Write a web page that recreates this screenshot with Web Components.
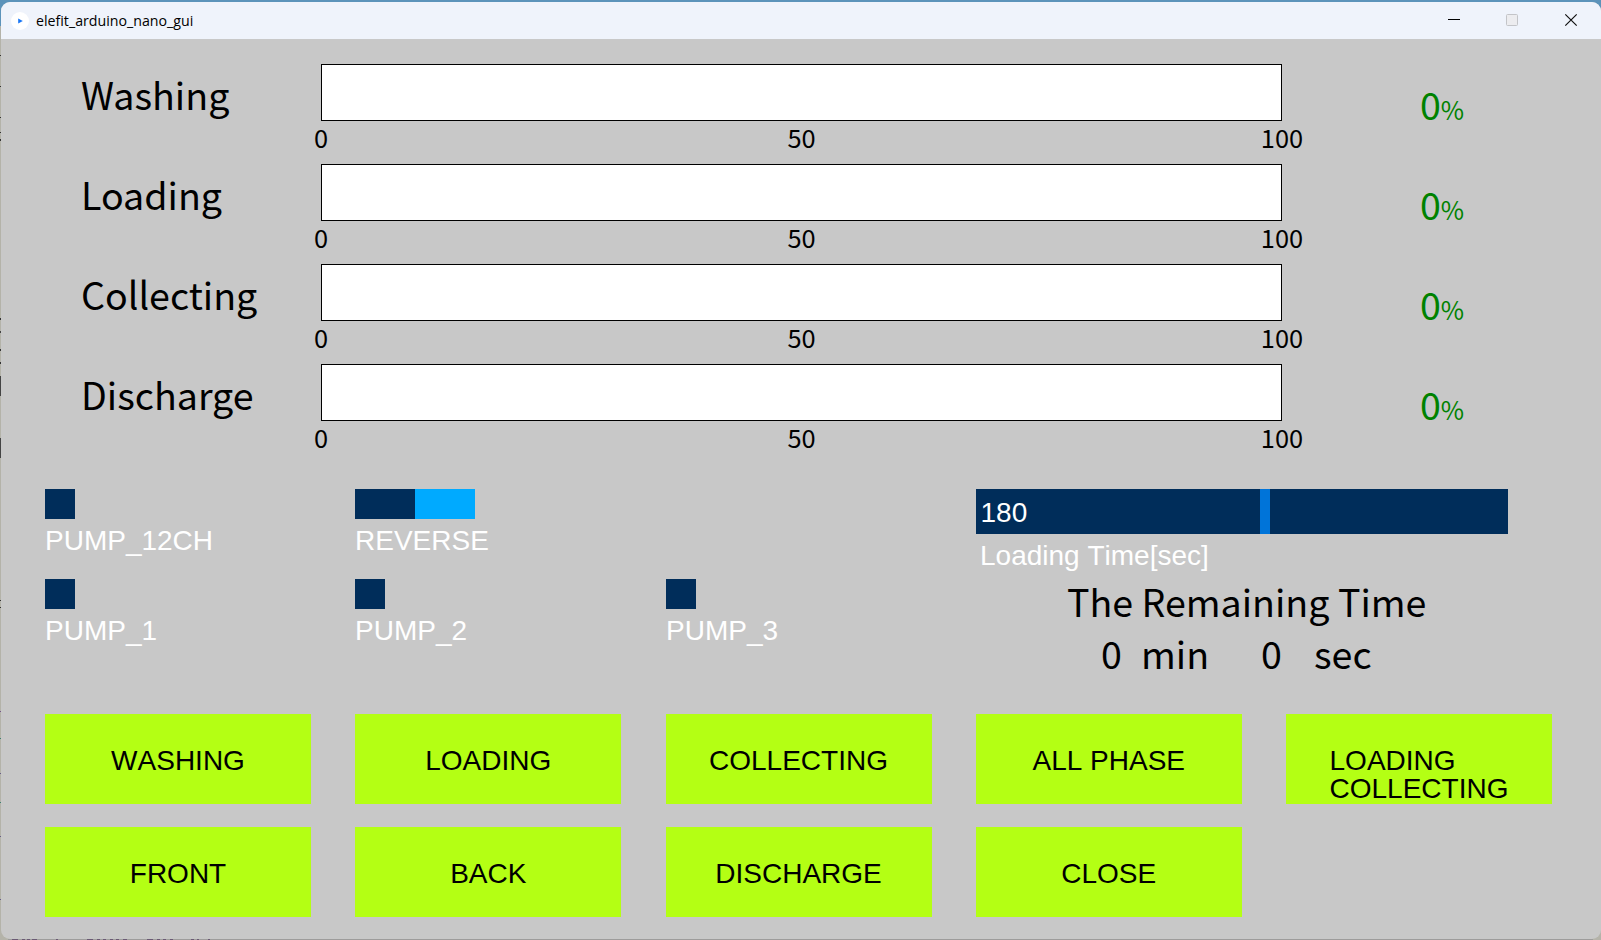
<!DOCTYPE html>
<html lang="en">
<head>
<meta charset="utf-8">
<title>elefit_arduino_nano_gui</title>
<style>
html, body { margin: 0; height: 100%; overflow: hidden; }
</style>
</head>
<body>
<desktop-backdrop>
  <app-window>
    <title-bar slot="title">elefit_arduino_nano_gui</title-bar>
    <section-progress>
      <progress-row label="Washing" value="0"></progress-row>
      <progress-row label="Loading" value="0"></progress-row>
      <progress-row label="Collecting" value="0"></progress-row>
      <progress-row label="Discharge" value="0"></progress-row>
    </section-progress>
    <section-controls>
      <toggle-switch slot="toggles">PUMP_12CH</toggle-switch>
      <toggle-switch slot="toggles" wide>REVERSE</toggle-switch>
      <span slot="toggles"></span>
      <toggle-switch slot="toggles">PUMP_1</toggle-switch>
      <toggle-switch slot="toggles">PUMP_2</toggle-switch>
      <toggle-switch slot="toggles">PUMP_3</toggle-switch>
      <value-slider slot="time" value="180">Loading Time[sec]</value-slider>
      <remaining-time slot="time" min="0" sec="0">The Remaining Time</remaining-time>
    </section-controls>
    <button-grid>
      <push-button>WASHING</push-button>
      <push-button>LOADING</push-button>
      <push-button>COLLECTING</push-button>
      <push-button>ALL PHASE</push-button>
      <push-button>LOADING<br>COLLECTING</push-button>
      <push-button>FRONT</push-button>
      <push-button>BACK</push-button>
      <push-button>DISCHARGE</push-button>
      <push-button>CLOSE</push-button>
    </button-grid>
  </app-window>
</desktop-backdrop>
<script>
const define = (name, render) => customElements.define(name, class extends HTMLElement {
  constructor() {
    super();
    this.attachShadow({ mode: 'open' }).innerHTML = render(this);
  }
});
const SOURCE = '"Noto Sans CJK JP", "Noto Sans", sans-serif';
const ARIAL = '"Liberation Sans", Arial, sans-serif';

define('desktop-backdrop', () => {
  // Slivers of the document behind the window, visible along its left edge: [y, height, colour]
  const marks = [[55,1,'#333'],[86,1,'#333'],[117,1,'#333'],[132,1,'#333'],[139,2,'#333'],
    [318,2,'#333'],[331,2,'#444'],[349,2,'#333'],[362,2,'#333'],[376,20,'#444'],[438,20,'#444'],
    [600,1,'#333'],[607,1,'#333'],[711,1,'#75568a'],[738,1,'#3c8073'],[773,1,'#665d87'],
    [802,1,'#3c8073'],[836,1,'#665d87'],[899,1,'#665d87']];
  const dashes = [[12,6],[22,3],[27,3],[32,5],[56,2],[87,6],[97,3],[103,3],[110,3],[116,3],[123,4],[147,6],[157,3],[163,3],[170,3],[191,3],[197,2],[208,2]];
  return `<style>
    :host { display: block; position: relative; width: 100%; height: 100vh; box-sizing: border-box; padding: 2px 0 1px 1px;
      background: linear-gradient(#5c93ba 0 26px, #b4b3a9 26px); }
    svg { position: absolute; inset: 0; width: 100%; height: 100%; }
    ::slotted(*) { position: relative; }
  </style>
  <svg aria-hidden="true" shape-rendering="crispEdges">
    <rect x="8" y="939" width="1585" height="1" fill="#9d9c9b"/>
    ${marks.map(([y, h, c]) => `<rect x="0" y="${y}" width="1" height="${h}" fill="${c}"/>`).join('')}
    ${dashes.map(([x, w]) => `<rect x="${x}" y="939" width="${w}" height="1" fill="#6b5a74"/>`).join('')}
  </svg>
  <slot></slot>`;
});

define('app-window', () => `<style>
    :host { display: flex; flex-direction: column; height: 937px; background: #c8c8c8; border-radius: 9px; overflow: hidden; }
  </style><slot name="title"></slot><slot></slot>`);

define('title-bar', () => `<style>
    :host { display: flex; align-items: center; flex: none; height: 37px; box-sizing: border-box; padding-left: 10px;
      background: #eff3fb; color: #000; font: 14.2px/20px "Open Sans", "Noto Sans", sans-serif; }
    .icon { width: 18px; height: 18px; margin-right: 7px; }
    .name { flex: 1; }
    .ctl { width: 60px; height: 37px; }
  </style>
  <svg class="icon" viewBox="0 0 18 18"><circle cx="9" cy="9" r="9" fill="#fff"/><path d="M7.2 6.6 11.8 9 7.2 11.4Z" fill="#1976f5"/></svg>
  <span class="name"><slot></slot></span>
  <svg class="ctl" viewBox="0 0 60 37"><path d="M27 17.5h12" stroke="#000"/></svg>
  <svg class="ctl" viewBox="0 0 60 37"><rect x="25.5" y="12.5" width="11" height="11" rx="1" fill="#ececef" stroke="#c3c4c8"/></svg>
  <svg class="ctl" viewBox="0 0 60 37"><path d="M24.3 12.3l11.4 11.4M35.7 12.3l-11.4 11.4" stroke="#111" stroke-width="1.2"/></svg>`);

define('section-progress', () => `<style>
    :host { display: flex; flex-direction: column; gap: 11px; padding: 25px 0 0 80px; }
  </style><slot></slot>`);

define('progress-row', el => `<style>
    :host { display: grid; grid-template-columns: 240px 961px auto; height: 89px; color: #000; font: 37.6px/55px ${SOURCE}; }
    .label { padding-top: 2px; }
    .bar { height: 57px; box-sizing: border-box; border: 1px solid #000; background: #fff; }
    .ticks { display: flex; justify-content: space-between; margin: 0 -40px; font-size: 25.4px; line-height: 32px; }
    .ticks span { width: 80px; text-align: center; }
    .pct { padding: 12px 0 0 137.9px; color: #008200; white-space: nowrap; }
    .pct small { font-size: 25.3px; line-height: 1; }
  </style>
  <div class="label">${el.getAttribute('label')}</div>
  <div><div class="bar"></div><div class="ticks"><span>0</span><span>50</span><span>100</span></div></div>
  <div class="pct">${el.getAttribute('value')}<small>%</small></div>`);

define('section-controls', () => `<style>
    :host { display: grid; grid-template-columns: 931px 532px; padding: 36px 0 0 44px; height: 261px; box-sizing: border-box; }
    .toggles { display: grid; grid-template-columns: 310px 311px 310px; grid-template-rows: 90px 90px; }
  </style>
  <div class="toggles"><slot name="toggles"></slot></div>
  <div><slot name="time"></slot></div>`);

define('toggle-switch', () => `<style>
    :host { display: block; color: #fff; font: 28px/29px ${ARIAL}; font-kerning: none; }
    .box { width: 30px; height: 30px; background: #002d5a; }
    :host([wide]) .box { width: 120px; background: linear-gradient(90deg, #002d5a 50%, #00aaff 50%); }
    .text { padding-top: 7px; }
  </style><div class="box"></div><div class="text"><slot></slot></div>`);

define('value-slider', el => `<style>
    :host { display: block; color: #fff; font: 28px/29px ${ARIAL}; font-kerning: none; }
    .track { display: flex; align-items: stretch; height: 45px; background: #002d5a; }
    .value { width: 279.5px; padding: 9px 0 0 4.5px; height: 36px; }
    .handle { width: 10px; background: #0074d9; }
    .text { padding: 7px 0 0 4px; height: 28px; }
  </style>
  <div class="track"><div class="value">${el.getAttribute('value')}</div><div class="handle"></div></div>
  <div class="text"><slot></slot></div>`);

define('remaining-time', el => `<style>
    :host { display: block; color: #000; font: 37.6px/55px ${SOURCE}; padding-top: 4px; white-space: nowrap; }
    .head { height: 52px; padding-left: 91px; }
    .clock { display: grid; grid-template-columns: 40px 120px 53px auto; padding-left: 125px; }
  </style>
  <div class="head"><slot></slot></div>
  <div class="clock"><span>${el.getAttribute('min')}</span><span>min</span><span>${el.getAttribute('sec')}</span><span>sec</span></div>`);

define('button-grid', () => `<style>
    :host { display: grid; grid-template-columns: 266px 266px 266px 266px 266px; grid-auto-rows: 90px;
      justify-content: space-between; width: 1507px; margin-left: 44px; row-gap: 23px; }
  </style><slot></slot>`);

define('push-button', () => `<style>
    :host { display: flex; justify-content: center; align-items: flex-start; box-sizing: border-box; padding-top: 33px;
      background: #b4ff14; color: #000; font: 28px/28px ${ARIAL}; font-kerning: none; }
  </style><span><slot></slot></span>`);
</script>
</body>
</html>
